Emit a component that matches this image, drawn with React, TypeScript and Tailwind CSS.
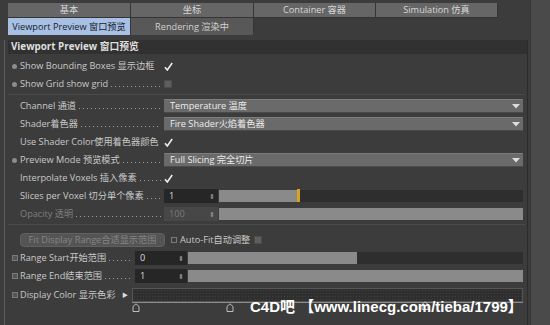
import React from 'react';

const font = { fontFamily: '"Open Sans", "Noto Sans", "Noto Sans CJK SC", sans-serif' };

const Dots = () => (
    <span className="flex-1 min-w-0 h-[1px] self-end mb-[4px] ml-[3px] bg-[repeating-linear-gradient(to_right,#9c9c9c_0_1px,transparent_1px_4px)]" />
);

const Dot = () => <span className="block w-[5px] h-[5px] rounded-full bg-[#8c8c8c] ml-[1px]" />;
const Key = () => <span className="block w-[6px] h-[6px] border border-[#7a7a7a] bg-[#555] ml-[1px]" />;

const Check = () => (
    <span className="block relative w-[9px] h-[9px] shrink-0">
        <svg width="9" height="9" viewBox="0 0 9 9" className="absolute left-0 top-0">
            <path d="M1 5.2 L3.3 8 L8.2 1" fill="none" stroke="#ececec" strokeWidth="1.6" />
        </svg>
    </span>
);
const Box = () => <span className="block w-[8px] h-[8px] shrink-0 bg-[#5e5e5e] border border-[#4c4c4c]" />;

const Arrow = () => (
    <svg width="8" height="5" viewBox="0 0 8 5" className="ml-auto mr-[3px]">
        <path d="M0 0 L8 0 L4 4.5 Z" fill="#dcdcdc" />
    </svg>
);

interface RowProps {
    lead?: 'dot' | 'key' | null;
    label: string;
    dots?: boolean;
    labelW?: string;
    dim?: boolean;
    children?: React.ReactNode;
}

const Row = ({ lead = null, label, dots = true, labelW = 'w-[141px]', dim = false, children }: RowProps) => (
    <div className="flex items-center h-[18px]">
        <div className="w-[12px] shrink-0 flex items-center justify-center">
            {lead === 'dot' && <Dot />}
            {lead === 'key' && <Key />}
        </div>
        <div className={`${labelW} shrink-0 relative h-[14px] ${dim ? 'text-[#7e7e7e]' : 'text-[#c9c9c9]'}`}>
            <div className={`absolute left-0 top-0 h-[14px] flex items-center whitespace-nowrap ${dots ? 'right-0 overflow-hidden' : ''}`}>
                <span className="leading-[14px]">{label}</span>
                {dots && <Dots />}
            </div>
        </div>
        <div className="flex-1 min-w-0 flex items-center pl-[3px] pr-[4px]">{children}</div>
    </div>
);

const Dropdown = ({ text }: { text: string }) => (
    <div className="flex-1 h-[14px] flex items-center bg-[#6a6a6a] border-t border-[#7c7c7c] border-b border-b-[#4a4a4a] rounded-[1px] pl-[6px] text-[#ececec]">
        <span>{text}</span>
        <Arrow />
    </div>
);

const NumSlider = ({ value, fill, dim = false, inputW = 'w-[54px]', marker = false }: { value: string; fill: number; dim?: boolean; inputW?: string; marker?: boolean }) => (
    <div className="flex-1 flex items-center h-[14px] gap-[1px]">
        <div className={`${inputW} shrink-0 h-[14px] flex items-center pl-[5px] pr-[3px] ${dim ? 'bg-[#474747] text-[#7a7a7a]' : 'bg-[#262626] text-[#dadada]'}`}>
            <span>{value}</span>
            <span className="ml-auto text-[7px] leading-none text-[#8a8a8a]">⬍</span>
        </div>
        <div className="flex-1 h-[12px] bg-[#2e2e2e] flex relative">
            <div className="h-full bg-[#8a8a8a]" style={{ width: `${fill}%` }} />
            {marker && <div className="h-[13px] -mt-[1px] w-[3px] bg-[#d9a21f]" />}
        </div>
    </div>
);

const Knot = () => (
    <svg width="8" height="9" viewBox="0 0 8 9">
        <path d="M1 8.5 L1 3.5 L4 0.8 L7 3.5 L7 8.5 Z" fill="none" stroke="#bdbdbd" strokeWidth="1" />
    </svg>
);

export default function App() {
    return (
        <div className="w-[550px] h-[325px] bg-[#3c3c3c] relative overflow-hidden text-[9.2px] leading-none flex" style={font}>
            <div className="w-[530px] h-full flex flex-col">
                {/* tabs */}
                <div className="pt-[3px] pl-[8px]">
                    <div className="grid grid-cols-[123px_123px_122px_122px] w-[490px]">
                        {['基本', '坐标', 'Container 容器', 'Simulation 仿真'].map((t) => (
                            <div key={t} className="h-[15px] flex items-center justify-center bg-[#666] border-r border-b border-[#353535] text-[#d6d6d6]">
                                {t}
                            </div>
                        ))}
                    </div>
                    <div className="grid grid-cols-[123px_123px] w-[246px]">
                        <div className="h-[17px] flex items-center justify-center bg-[#a7c0e4] text-[#18202c] border-r border-[#353535] whitespace-nowrap">
                            Viewport Preview 窗口预览
                        </div>
                        <div className="h-[17px] flex items-center justify-center bg-[#585858] text-[#d0d0d0] border-r border-[#353535]">
                            Rendering 渲染中
                        </div>
                    </div>
                </div>

                {/* content */}
                <div className="flex-1 mt-[5px] ml-[4px] mr-[2px] border-l border-[#5c5c5c] border-r border-r-[#2c2c2c] pl-[3px] flex flex-col">
                    <div className="h-[14px] bg-[#313131] flex items-center pl-[3px] font-bold text-[9.8px] text-[#dedede]">
                        Viewport Preview 窗口预览
                    </div>
                    <div className="h-[3px]" />
                    <Row lead="dot" label="Show Bounding Boxes 显示边框" dots={false}>
                        <Check />
                    </Row>
                    <Row lead="dot" label="Show Grid show grid">
                        <Box />
                    </Row>
                    <div className="h-[1px] bg-[#2c2c2c] border-b border-[#4a4a4a] my-[1px] mr-[2px]" />
                    <div className="h-[1px]" />
                    <Row label="Channel 通道">
                        <Dropdown text="Temperature 温度" />
                    </Row>
                    <Row label="Shader着色器">
                        <Dropdown text="Fire Shader火焰着色器" />
                    </Row>
                    <Row label="Use Shader Color使用着色器颜色" dots={false}>
                        <Check />
                    </Row>
                    <Row lead="dot" label="Preview Mode 预览模式">
                        <Dropdown text="Full Slicing 完全切片" />
                    </Row>
                    <Row label="Interpolate Voxels 插入像素">
                        <Check />
                    </Row>
                    <Row label="Slices per Voxel 切分单个像素">
                        <NumSlider value="1" fill={25.5} marker />
                    </Row>
                    <Row label="Opacity 透明" dim>
                        <NumSlider value="100" fill={100} dim />
                    </Row>
                    <div className="h-[1px] bg-[#2c2c2c] border-b border-[#4a4a4a] my-[1px] mr-[2px]" />
                    <div className="h-[5px]" />
                    <div className="flex items-center h-[18px] pl-[12px]">
                        <div className="w-[145px] h-[14px] rounded-[4px] bg-[#545454] border border-[#606060] flex items-center justify-center text-[#858585]">
                            Fit Display Range合适显示范围
                        </div>
                        <span className="ml-[6px] w-[6px] h-[6px] border border-[#7a7a7a]" />
                        <span className="ml-[3px] text-[#c9c9c9]">Auto-Fit自动调整</span>
                        <span className="ml-[4px]"><Box /></span>
                    </div>
                    <Row lead="key" label="Range Start开始范围" labelW="w-[112px]">
                        <NumSlider value="0" fill={50.5} inputW="w-[52px]" />
                    </Row>
                    <Row lead="key" label="Range End结束范围" labelW="w-[112px]">
                        <NumSlider value="1" fill={100} inputW="w-[52px]" />
                    </Row>
                    <div className="flex items-start h-[22px] pt-[3px]">
                        <div className="w-[12px] h-[14px] flex items-center justify-center"><Key /></div>
                        <div className="w-[109px] h-[14px] flex items-center text-[#c9c9c9] whitespace-nowrap">
                            Display Color 显示色彩
                            <span className="ml-auto mr-[1px] text-[6px] text-[#dcdcdc]">▶</span>
                        </div>
                        <div className="flex-1 mr-[4px] ml-[3px] flex flex-col">
                            <div className="h-[14px] bg-[#2f2f2f] border border-[#555] bg-[radial-gradient(#3e3e3e_1px,transparent_1px)] bg-[length:3px_3px]" />
                            <div className="h-[1px] bg-[#8a8a8a]" />
                            <div className="relative h-[10px]">
                                <span className="absolute left-[0px] top-0"><Knot /></span>
                                <span className="absolute left-[94px] top-0"><Knot /></span>
                                <span className="absolute left-[289px] -top-[2px]"><Knot /></span>
                            </div>
                        </div>
                    </div>
                </div>
            </div>
            <div className="flex-1 h-full bg-[#4a4a4a] border-l border-[#363636]" />
            <div className="absolute left-[250px] top-[299px] text-[15px] font-bold text-white whitespace-nowrap" style={{ fontFamily: '"Liberation Sans", "Noto Sans CJK SC", sans-serif' }}>
                C4D吧 【www.linecg.com/tieba/1799】
            </div>
        </div>
    );
}
